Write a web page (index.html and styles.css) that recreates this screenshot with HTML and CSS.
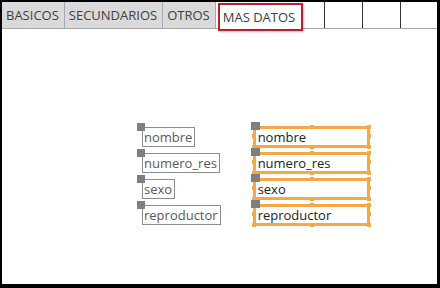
FILE: index.html
```html
<!DOCTYPE html>
<html>
    <head>
        <meta charset="utf-8">
        <title>Formulario - MAS DATOS</title>
        <link rel="stylesheet" href="styles.css">
    </head>
    <body>
        <div class="frame">
            <div class="tabs">
                <div class="tab">BASICOS</div>
                <div class="tab">SECUNDARIOS</div>
                <div class="tab">OTROS</div>
                <div class="tab current">MAS DATOS</div>
                <div class="cell c1"></div>
                <div class="cell"></div>
                <div class="cell"></div>
                <div class="cell last"></div>
            </div>
            <div class="canvas">
                <div class="col labels">
                    <div class="ctl"><span class="grip"></span><span class="box">nombre</span></div>
                    <div class="ctl"><span class="grip"></span><span class="box">numero_res</span></div>
                    <div class="ctl"><span class="grip"></span><span class="box">sexo</span></div>
                    <div class="ctl"><span class="grip"></span><span class="box">reproductor</span></div>
                </div>
                <div class="col fields">
                    <div class="ctl"><span class="grip"></span><span class="box">nombre<i class="d t"></i><i class="d b"></i><i class="d l"></i><i class="d r"></i><i class="d tr"></i><i class="d br"></i><i class="d bl"></i></span></div>
                    <div class="ctl"><span class="grip"></span><span class="box">numero_res<i class="d t"></i><i class="d b"></i><i class="d l"></i><i class="d r"></i><i class="d tr"></i><i class="d br"></i><i class="d bl"></i></span></div>
                    <div class="ctl"><span class="grip"></span><span class="box">sexo<i class="d t"></i><i class="d b"></i><i class="d l"></i><i class="d r"></i><i class="d tr"></i><i class="d br"></i><i class="d bl"></i></span></div>
                    <div class="ctl"><span class="grip"></span><span class="box">reproductor<i class="d t"></i><i class="d b"></i><i class="d l"></i><i class="d r"></i><i class="d tr"></i><i class="d br"></i><i class="d bl"></i></span></div>
                </div>
            </div>
        </div>
    </body>
</html>
```

FILE: styles.css
```css
body{margin:0;background:#fff;font-family:"Open Sans","Noto Sans",sans-serif;}
.frame{width:440px;height:288px;box-sizing:border-box;border:2px solid #000;border-right-width:3px;border-bottom-width:4px;background:#fff;}

.tabs{display:flex;height:26px;border-bottom:1px solid #a6a6a6;box-sizing:content-box;}
.tab{flex-shrink:0;white-space:nowrap;background:#dadada;border-right:1px solid #a3a9b0;font-size:13px;color:#404040;line-height:26px;padding:0 5px 0 4px;}
.tab.current{background:#fff;border:2px solid #b5232a;margin:1px 0 -3px 2px;line-height:24px;padding:0 6px 0 3px;box-shadow:1px 1px 2px rgba(0,0,0,0.25);position:relative;z-index:1;}
.cell{flex-shrink:0;width:37px;border-right:1px solid #333;}
.cell.c1{width:21px;}
.cell.last{border-right:none;flex:1;}

.canvas{display:flex;padding:94px 0 0 135px;gap:29px;}
.col{display:flex;flex-direction:column;gap:2px;}
.ctl{position:relative;display:flex;padding:4px 0 0 5px;}
.grip{position:absolute;left:0;top:0;width:8px;height:8px;background:#7f7f7f;z-index:1;}
.box{display:block;height:20px;box-sizing:border-box;font-size:13px;line-height:18px;padding:0 2px 0 1px;}
.labels .box{border:1px solid #8c8c8c;color:#595959;}

.fields{gap:0;margin-top:-1px;}
.fields .ctl{padding:4px 0 0 3px;}
.fields .grip{left:1px;width:9px;}
.fields .box{position:relative;width:117px;height:22px;border:3px solid #f5a843;color:#222;line-height:16px;padding-left:2px;}
.d{position:absolute;width:4px;height:4px;background:#f5a843;}
.d.t{top:-4px;left:54px;}
.d.b{bottom:-4px;left:54px;}
.d.l{left:-4px;top:5px;}
.d.r{right:-4px;top:5px;}
.d.tr{right:-4px;top:-4px;}
.d.br{right:-4px;bottom:-4px;}
.d.bl{left:-4px;bottom:-4px;}
```
